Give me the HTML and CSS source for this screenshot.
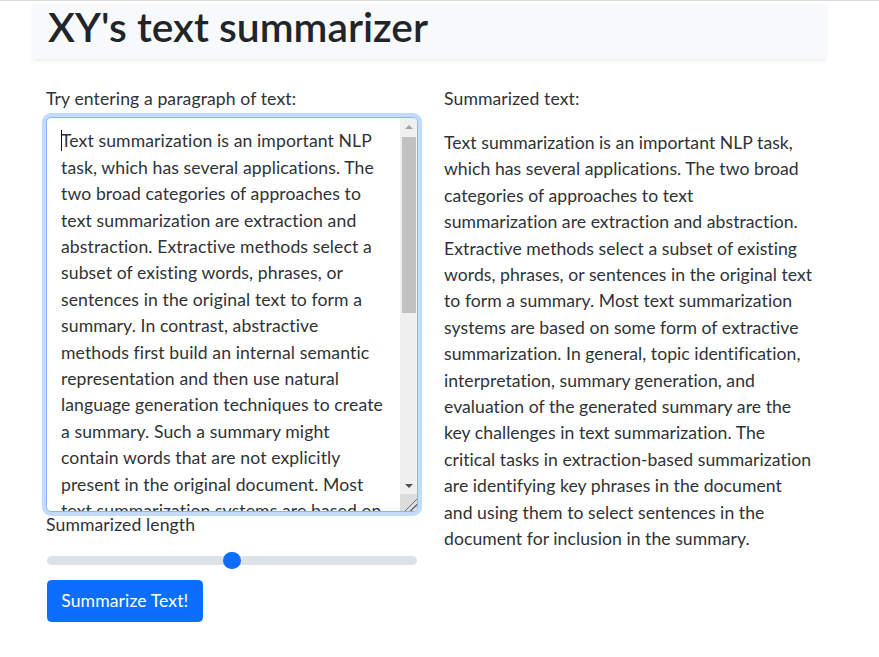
FILE: index.html
```html
<!DOCTYPE html>
<html lang="en">
<head>
<meta charset="utf-8">
<title>XY's text summarizer</title>
<link rel="stylesheet" href="styles.css">
</head>
<body>
<main class="container">
  <header class="banner">
    <h1 class="title">XY's text summarizer</h1>
  </header>
  <div class="row">
    <section class="col">
      <label class="label input-label" for="input">Try entering a paragraph of text:</label>
      <div class="field">
        <textarea id="input" class="input">Text summarization is an important NLP task, which has several applications. The two broad categories of approaches to text summarization are extraction and abstraction. Extractive methods select a subset of existing words, phrases, or sentences in the original text to form a summary. In contrast, abstractive methods first build an internal semantic representation and then use natural language generation techniques to create a summary. Such a summary might contain words that are not explicitly present in the original document. Most text summarization systems are based on some form of extractive summarization. In general, topic identification, interpretation, summary generation, and evaluation of the generated summary are the key challenges in text summarization. The critical tasks in extraction-based summarization are identifying key phrases in the document and using them to select sentences in the document for inclusion in the summary. In contrast, abstraction-based approaches require a deep understanding of the document, which is why they remain an active area of research.</textarea>
        <span class="caret" aria-hidden="true"></span>
        <div class="scrollbar" aria-hidden="true">
          <div class="sb-btn sb-up"><span class="arrow-up"></span></div>
          <div class="sb-track"><div class="sb-thumb"></div></div>
          <div class="sb-btn sb-down"><span class="arrow-down"></span></div>
          <div class="sb-corner"></div>
        </div>
      </div>
      <label class="label" for="length">Summarized length</label>
      <input type="range" class="range" id="length" min="0" max="100" value="50">
      <button type="button" class="btn">Summarize Text!</button>
    </section>
    <section class="col">
      <p class="label heading">Summarized text:</p>
      <p class="summary">Text summarization is an important NLP task,<br>
which has several applications. The two broad<br>
categories of approaches to text<br>
summarization are extraction and abstraction.<br>
Extractive methods select a subset of existing<br>
words, phrases, or sentences in the original text<br>
to form a summary. Most text summarization<br>
systems are based on some form of extractive<br>
summarization. In general, topic identification,<br>
interpretation, summary generation, and<br>
evaluation of the generated summary are the<br>
key challenges in text summarization. The<br>
critical tasks in extraction-based summarization<br>
are identifying key phrases in the document<br>
and using them to select sentences in the<br>
document for inclusion in the summary.</p>
    </section>
  </div>
</main>
</body>
</html>
```
FILE: styles.css
```css
html, body {
  margin: 0;
  padding: 0;
}

body {
  border-top: 1px solid #dcdcdc;
  background: #fff;
  color: #2f3337;
  font-family: Lato, "Open Sans", sans-serif;
  font-size: 17.6px;
  line-height: 26.4px;
  letter-spacing: 0.1px;
}

.container {
  width: 793px;
  margin-left: 33px;
}

.banner {
  margin-top: 3px;
  height: 55px;
  background: #f8f9fa;
  box-shadow: 0 2px 4px rgba(0, 0, 0, 0.075);
  padding: 0 15px;
  box-sizing: border-box;
}

.title {
  margin: 0;
  font-size: 40.8px;
  font-weight: 600;
  line-height: 45px;
  letter-spacing: 0;
  color: #212529;
}

.row {
  display: flex;
  margin-top: 27px;
}

.col {
  flex: 1 1 0;
  padding: 0 13px;
  display: flex;
  flex-direction: column;
  align-items: flex-start;
}

.label {
  display: block;
  margin: 0;
}

.input-label {
  margin-bottom: 5px;
}

.field {
  position: relative;
  width: 372px;
  height: 395px;
}

.input {
  box-sizing: border-box;
  display: block;
  width: 100%;
  height: 100%;
  margin: 0;
  padding: 10px 30px 6px 14px;
  font: inherit;
  letter-spacing: inherit;
  color: inherit;
  border: 1px solid #86b7fe;
  border-radius: 5px;
  box-shadow: 0 0 0 4px rgba(13, 110, 253, 0.25);
  outline: none;
  overflow: hidden;
  resize: none;
  background: #fff;
}

.caret {
  position: absolute;
  left: 15px;
  top: 13px;
  width: 1px;
  height: 21px;
  background: #111;
}

.scrollbar {
  position: absolute;
  top: 1px;
  right: 1px;
  bottom: 1px;
  width: 17px;
  display: flex;
  flex-direction: column;
  background: #f0f0f0;
  border-top-right-radius: 4px;
  border-bottom-right-radius: 4px;
  overflow: hidden;
}

.sb-btn {
  height: 17px;
  flex: none;
  display: flex;
  align-items: center;
  justify-content: center;
}

.arrow-up {
  width: 0;
  height: 0;
  border-left: 4px solid transparent;
  border-right: 4px solid transparent;
  border-bottom: 4px solid #a3a3a3;
}

.arrow-down {
  width: 0;
  height: 0;
  border-left: 4px solid transparent;
  border-right: 4px solid transparent;
  border-top: 4px solid #505050;
}

.sb-track {
  flex: 1 1 auto;
  padding: 2px 1px 0 2px;
}

.sb-thumb {
  height: 176px;
  background: #c1c1c1;
}

.sb-corner {
  height: 17px;
  flex: none;
  background:
    linear-gradient(135deg, transparent 62%, #6d6d6d 62%, #6d6d6d 67%, transparent 67%, transparent 78%, #6d6d6d 78%, #6d6d6d 83%, transparent 83%),
    #dcdcdc;
}

.range {
  -webkit-appearance: none;
  appearance: none;
  display: block;
  width: 370px;
  height: 26.4px;
  margin: 8.6px 0 0 1px;
  padding: 0;
  background: transparent;
}

.range::-webkit-slider-runnable-track {
  height: 8.8px;
  background: #dee2e6;
  border-radius: 8px;
}

.range::-webkit-slider-thumb {
  -webkit-appearance: none;
  appearance: none;
  width: 17.6px;
  height: 17.6px;
  margin-top: -4.4px;
  border-radius: 50%;
  background: #0d6efd;
  border: 0;
}

.btn {
  margin: 6.6px 0 0 1px;
  padding: 6.6px 13.2px;
  font: inherit;
  letter-spacing: inherit;
  color: #fff;
  background: #0d6efd;
  border: 1px solid #0d6efd;
  border-radius: 4.4px;
  cursor: pointer;
}

.heading {
  margin-bottom: 17.6px;
}

.summary {
  margin: 0;
  white-space: nowrap;
  letter-spacing: 0.05px;
}
```
